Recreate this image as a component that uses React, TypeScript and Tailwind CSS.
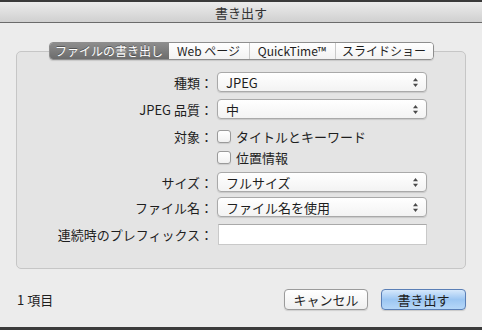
const tabs = [
  { label: "ファイルの書き出し", width: "w-[119px]", active: true },
  { label: "Web ページ", width: "w-[80px]", active: false },
  { label: "QuickTime™", width: "w-[86px]", active: false },
  { label: "スライドショー", width: "w-[98px]", active: false },
];

function Arrows() {
  return (
    <svg width="7" height="11" viewBox="0 0 7 11" aria-hidden="true">
      <path d="M3.5 1 L6 4.2 L1 4.2 Z" fill="#4a4a4a" />
      <path d="M3.5 10 L6 6.8 L1 6.8 Z" fill="#4a4a4a" />
    </svg>
  );
}

function Popup({ value }: { value: string }) {
  return (
    <div className="flex h-[20px] w-[210px] items-center justify-between rounded-[4px] border border-[#a9a9a9] bg-gradient-to-b from-white to-[#f3f3f3] pl-[8px] pr-[7px] text-[13px] leading-none text-[#1e1e1e] shadow-[0_1px_1px_rgba(0,0,0,0.12)]">
      <span>{value}</span>
      <Arrows />
    </div>
  );
}

function Label({ text }: { text: string }) {
  return (
    <div className="w-[196px] shrink-0 text-right text-[13px] leading-none text-[#1e1e1e]">
      {text}
    </div>
  );
}

function Check({ text }: { text: string }) {
  return (
    <div className="flex items-center gap-[5px]">
      <div className="h-[13px] w-[14px] rounded-[3px] border border-[#9a9a9a] bg-gradient-to-b from-white to-[#f1f1f1] shadow-[0_1px_1px_rgba(0,0,0,0.1)]" />
      <span className="text-[13px] leading-none text-[#1e1e1e]">{text}</span>
    </div>
  );
}

export default function App() {
  return (
    <div className="flex h-[330px] w-[482px] flex-col bg-[#3b3b3b] font-['Noto_Sans_CJK_JP','Noto_Sans',sans-serif]">
      <div className="h-[2px]" />
      <div className="flex h-[21px] items-center justify-center border-b border-[#6b6b6b] bg-gradient-to-b from-[#ececec] to-[#d0d0d0] text-[13px] leading-none text-[#333]">
        書き出す
      </div>

      <div className="flex h-[304px] flex-col bg-[#ececec] px-[16px] pt-[19px]">
        <div className="z-10 flex justify-center">
          <div className="flex h-[18px] overflow-hidden rounded-[4px] border border-[#8e8e8e] shadow-[0_1px_1px_rgba(0,0,0,0.12)]">
            {tabs.map((tab, i) => (
              <div
                key={tab.label}
                className={`flex items-center justify-center text-[12px] leading-none ${tab.width} ${
                  tab.active
                    ? "bg-gradient-to-b from-[#8d8d8d] to-[#6c6c6c] text-white [text-shadow:0_-1px_0_rgba(0,0,0,0.35)]"
                    : "bg-gradient-to-b from-white to-[#f2f2f2] text-[#1e1e1e]"
                } ${i > 1 ? "border-l border-[#c9c9c9]" : ""}`}
              >
                {tab.label}
              </div>
            ))}
          </div>
        </div>

        <div className="-mt-[9px] flex h-[218px] flex-col rounded-[5px] border border-[#c6c6c6] bg-[#e4e4e4] pt-[20px]">
          <div className="flex h-[20px] items-center gap-[4px]">
            <Label text="種類：" />
            <Popup value="JPEG" />
          </div>
          <div className="mt-[7px] flex h-[20px] items-center gap-[4px]">
            <Label text="JPEG 品質：" />
            <Popup value="中" />
          </div>
          <div className="mt-[7px] flex h-[20px] items-center gap-[4px]">
            <Label text="対象：" />
            <Check text="タイトルとキーワード" />
          </div>
          <div className="mt-[1px] flex h-[20px] items-center gap-[4px]">
            <div className="w-[196px] shrink-0" />
            <Check text="位置情報" />
          </div>
          <div className="mt-[5px] flex h-[20px] items-center gap-[4px]">
            <Label text="サイズ：" />
            <Popup value="フルサイズ" />
          </div>
          <div className="mt-[5px] flex h-[20px] items-center gap-[4px]">
            <Label text="ファイル名：" />
            <Popup value="ファイル名を使用" />
          </div>
          <div className="mt-[7px] flex h-[21px] items-center gap-[4px]">
            <Label text="連続時のプレフィックス：" />
            <div className="ml-[1px] h-[21px] w-[209px] border border-[#c9c9c9] border-t-[#a9a9a9] bg-white" />
          </div>
        </div>

        <div className="mt-[20px] flex items-center justify-between pl-[1px]">
          <span className="text-[13px] leading-none text-[#1e1e1e]">1 項目</span>
          <div className="flex gap-[13px]">
            <button className="flex h-[21px] w-[84px] items-center justify-center rounded-[4px] border border-[#9b9b9b] bg-gradient-to-b from-white to-[#efefef] text-[13px] leading-none text-[#1e1e1e] shadow-[0_1px_1px_rgba(0,0,0,0.12)]">
              キャンセル
            </button>
            <button className="flex h-[21px] w-[85px] items-center justify-center rounded-[4px] border border-[#5a7fb6] bg-gradient-to-b from-[#d6e8fb] via-[#9cc6f2] to-[#b5d7f8] text-[13px] leading-none text-[#1e1e1e] shadow-[0_1px_1px_rgba(0,0,0,0.15)]">
              書き出す
            </button>
          </div>
        </div>
      </div>
      <div className="h-[3px]" />
    </div>
  );
}
